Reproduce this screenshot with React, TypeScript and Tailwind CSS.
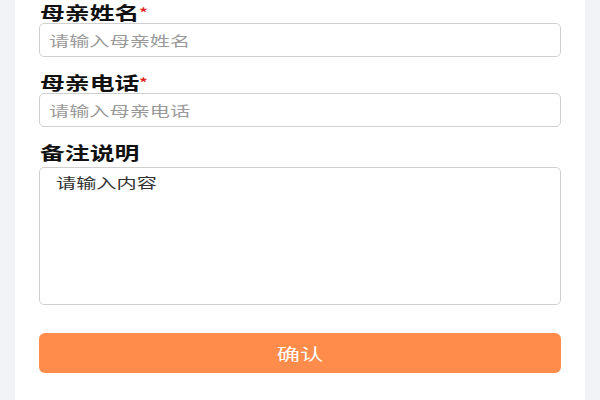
import React from "react";

const font = { fontFamily: '"Noto Sans CJK SC", "Noto Sans", sans-serif' };

function Label({ text, required }: { text: string; required?: boolean }) {
  return (
    <div className="h-[22px] pt-[1px] pl-[1px]">
      <span className="inline-block origin-left scale-x-[1.38] text-[18px] leading-[18px] font-bold text-[#111111] whitespace-nowrap">
        {text}
        {required && <span className="text-[#e02020] text-[12px] align-top font-bold">*</span>}
      </span>
    </div>
  );
}

function Input({ placeholder }: { placeholder: string }) {
  return (
    <div className="mt-[1px] h-[34px] rounded-[5px] border border-[#cfcfcf] bg-white flex items-center pl-[9px]">
      <span className="inline-block origin-left scale-x-[1.44] text-[14px] text-[#9a9a9a] whitespace-nowrap">{placeholder}</span>
    </div>
  );
}

export default function App() {
  return (
    <div className="w-[600px] h-[400px] bg-[#f1f3f6] px-[15px] overflow-hidden" style={font}>
      <div className="h-full bg-white px-[24px] flex flex-col">
        <Label text="母亲姓名" required />
        <Input placeholder="请输入母亲姓名" />
        <div className="mt-[13px]">
          <Label text="母亲电话" required />
          <Input placeholder="请输入母亲电话" />
        </div>
        <div className="mt-[13px]">
          <Label text="备注说明" />
          <div className="mt-[5px] h-[138px] rounded-[5px] border border-[#cfcfcf] bg-white pl-[16px] pt-[1px]">
            <span className="inline-block origin-left scale-x-[1.44] text-[14px] leading-[22px] text-[#333333] whitespace-nowrap">请输入内容</span>
          </div>
        </div>
        <button className="mt-[28px] h-[40px] rounded-[6px] bg-[#ff8c4a] flex items-center justify-center">
          <span className="inline-block scale-x-[1.45] text-[16px] text-white">确认</span>
        </button>
      </div>
    </div>
  );
}
